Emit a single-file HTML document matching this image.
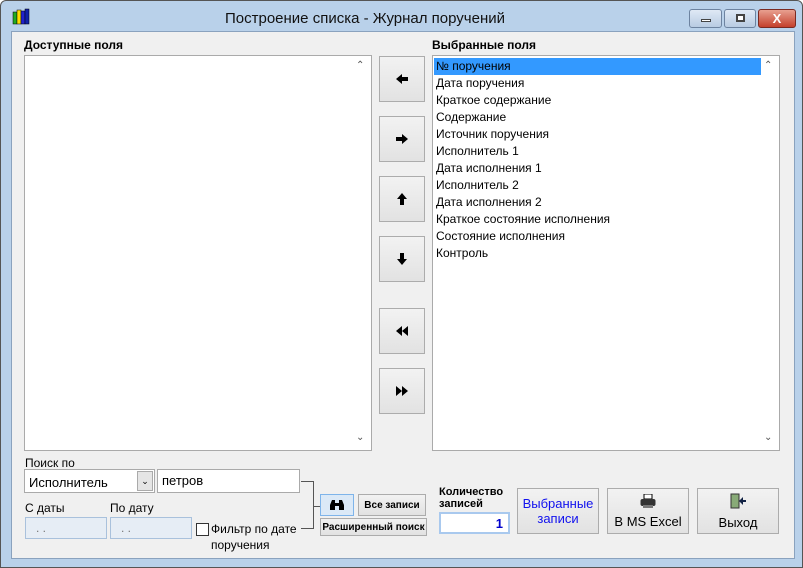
<!DOCTYPE html>
<html><head><meta charset="utf-8"><style>
*{box-sizing:border-box;margin:0;padding:0}
body{width:803px;height:568px;background:#fff;font-family:"Liberation Sans",sans-serif;font-size:12px;position:relative;overflow:hidden}
.a{position:absolute}
.frame{left:0;top:0;width:803px;height:568px;background:#b9d1ea;border:1px solid #555;border-radius:6px 6px 0 0}
.client{left:11px;top:31px;width:784px;height:528px;background:#f0f0f0;border:1px solid #8aa2be}
.lb{background:#fff;border:1px solid #aaa}
.btn{background:linear-gradient(#f2f2f2,#e2e2e2);border:1px solid #acacac;display:flex;align-items:center;justify-content:center;text-align:center}
.b{font-weight:bold}
.item{left:436px;height:17px;line-height:17px;font-size:12px}
.sb{font-size:10px;color:#555}
</style></head><body>
<div class="a frame"></div>
<div class="a" style="left:12px;top:7px;width:20px;height:18px">
<svg width="20" height="18"><rect x="1" y="5" width="4" height="12" fill="#2a2" stroke="#000" stroke-width=".5"/><rect x="5" y="3" width="4" height="14" fill="#fd0" stroke="#000" stroke-width=".5"/><rect x="9" y="4" width="4" height="13" fill="#22c" stroke="#000" stroke-width=".5"/><rect x="13" y="2" width="4" height="15" fill="#12a" stroke="#000" stroke-width=".5"/></svg></div>
<div class="a" style="left:0;width:730px;top:10px;text-align:center;font-size:15px;color:#111">Построение списка - Журнал поручений</div>
<div class="a" style="left:689px;top:9px;width:33px;height:19px;border:1px solid #6d83a0;border-radius:3px;background:linear-gradient(#dfe9f5,#b8cbe2)"><div class="a" style="left:11px;top:9px;width:10px;height:3px;background:#fff;border:1px solid #444"></div></div>
<div class="a" style="left:724px;top:9px;width:32px;height:19px;border:1px solid #6d83a0;border-radius:3px;background:linear-gradient(#dfe9f5,#b8cbe2)"><div class="a" style="left:11px;top:4px;width:9px;height:8px;border:2px solid #444;background:#fff"></div></div>
<div class="a" style="left:758px;top:9px;width:38px;height:19px;border:1px solid #7a2a22;border-radius:3px;background:linear-gradient(#e8a090,#c4402c);color:#fff;font-weight:bold;text-align:center;line-height:17px;font-size:13px">X</div>
<div class="a client"></div>
<div class="a b" style="left:24px;top:38px">Доступные поля</div>
<div class="a b" style="left:432px;top:38px">Выбранные поля</div>
<div class="a lb" style="left:24px;top:55px;width:348px;height:396px"></div>
<div class="a sb" style="left:356px;top:60px">&#8963;</div><div class="a sb" style="left:356px;top:432px">&#8964;</div>
<div class="a lb" style="left:432px;top:55px;width:348px;height:396px"></div>
<div class="a sb" style="left:764px;top:60px">&#8963;</div><div class="a sb" style="left:764px;top:432px">&#8964;</div>
<div class="a" style="left:434px;top:58px;width:327px;height:17px;background:#3399ff"></div>
<div class="a item" style="top:58px">№ поручения</div>
<div class="a item" style="top:75px">Дата поручения</div>
<div class="a item" style="top:92px">Краткое содержание</div>
<div class="a item" style="top:109px">Содержание</div>
<div class="a item" style="top:126px">Источник поручения</div>
<div class="a item" style="top:143px">Исполнитель 1</div>
<div class="a item" style="top:160px">Дата исполнения 1</div>
<div class="a item" style="top:177px">Исполнитель 2</div>
<div class="a item" style="top:194px">Дата исполнения 2</div>
<div class="a item" style="top:211px">Краткое состояние исполнения</div>
<div class="a item" style="top:228px">Состояние исполнения</div>
<div class="a item" style="top:245px">Контроль</div>
<div class="a btn" style="left:379px;top:56px;width:46px;height:46px"><svg width="12" height="12"><path d="M0 6L6 1V4H12V8H6V11Z"/></svg></div>
<div class="a btn" style="left:379px;top:116px;width:46px;height:46px"><svg width="12" height="12"><path d="M12 6L6 1V4H0V8H6V11Z"/></svg></div>
<div class="a btn" style="left:379px;top:176px;width:46px;height:46px"><svg width="12" height="12"><path d="M6 0L1 6H4V12H8V6H11Z"/></svg></div>
<div class="a btn" style="left:379px;top:236px;width:46px;height:46px"><svg width="12" height="12"><path d="M6 12L1 6H4V0H8V6H11Z"/></svg></div>
<div class="a btn" style="left:379px;top:308px;width:46px;height:46px"><svg width="12" height="10"><path d="M0 5L6 0V10ZM6 5L12 0V10Z"/></svg></div>
<div class="a btn" style="left:379px;top:368px;width:46px;height:46px"><svg width="12" height="10"><path d="M12 5L6 0V10ZM6 5L0 0V10Z"/></svg></div>
<div class="a" style="left:25px;top:456px">Поиск по</div>
<div class="a lb" style="left:24px;top:469px;width:131px;height:24px;padding:5px 4px;font-size:13px">Исполнитель</div>
<div class="a" style="left:137px;top:471px;width:16px;height:20px;background:#e5e5e5;border:1px solid #aaa;font-size:9px;text-align:center;line-height:18px">&#8964;</div>
<div class="a lb" style="left:157px;top:469px;width:143px;height:24px;padding:3px 4px;font-size:13px">петров</div>
<div class="a" style="left:301px;top:481px;width:13px;height:48px;border:1px solid #555;border-left:none"></div>
<div class="a" style="left:314px;top:506px;width:6px;border-top:1px solid #555"></div>
<div class="a" style="left:25px;top:501px">С даты</div>
<div class="a" style="left:110px;top:501px">По дату</div>
<div class="a" style="left:25px;top:517px;width:82px;height:22px;background:#e6edf5;border:1px solid #a9c1dc;color:#777;padding:3px 10px">. .</div>
<div class="a" style="left:110px;top:517px;width:82px;height:22px;background:#e6edf5;border:1px solid #a9c1dc;color:#777;padding:3px 10px">. .</div>
<div class="a" style="left:196px;top:523px;width:13px;height:13px;background:#fff;border:1px solid #333"></div>
<div class="a" style="left:211px;top:521px;line-height:16px">Фильтр по дате<br>поручения</div>
<div class="a btn" style="left:320px;top:494px;width:34px;height:22px;background:#dbe9f7;border-color:#7eb4ea"><svg width="16" height="12"><path d="M1 6L3 1H6V11H1ZM10 1H13L15 6V11H10ZM6 4H10V7H6Z"/></svg></div>
<div class="a btn b" style="left:358px;top:494px;width:68px;height:22px;font-size:10px">Все записи</div>
<div class="a btn b" style="left:320px;top:518px;width:107px;height:18px;font-size:10px">Расширенный поиск</div>
<div class="a b" style="left:439px;top:486px;font-size:11px;line-height:12px">Количество<br>записей</div>
<div class="a" style="left:439px;top:512px;width:71px;height:22px;background:#fff;border:2px solid #a9c9ee;color:#00c;font-weight:bold;text-align:right;padding:2px 5px;font-size:13px">1</div>
<div class="a btn" style="left:517px;top:488px;width:82px;height:46px;color:#11e;font-size:13px">Выбранные<br>записи</div>
<div class="a btn" style="left:607px;top:488px;width:82px;height:46px;font-size:13px;flex-direction:column;gap:6px"><svg width="16" height="14"><rect x="4" y="0" width="8" height="5" fill="#fff" stroke="#000"/><rect x="0.5" y="5" width="15" height="7" rx="2" fill="#333"/><rect x="3" y="11" width="10" height="3" fill="#777"/></svg>В MS Excel</div>
<div class="a btn" style="left:697px;top:488px;width:82px;height:46px;font-size:13px;flex-direction:column;gap:6px"><svg width="16" height="16"><rect x="1" y="1" width="8" height="14" fill="#8a7" stroke="#333"/><path d="M9 8L13 4V7H16V9H13V12Z" fill="#124"/></svg>Выход</div>
</body></html>
